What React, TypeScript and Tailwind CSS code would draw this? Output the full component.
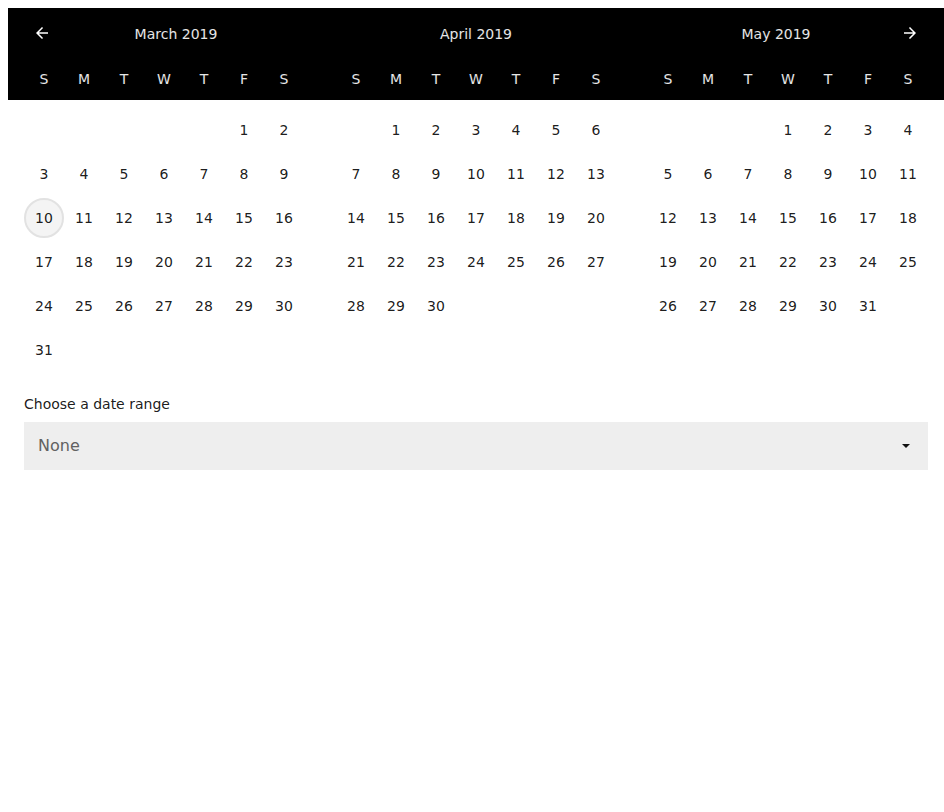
import React from 'react';

type Month = { name: string; start: number; days: number; prev?: boolean; next?: boolean };

const months: Month[] = [
  { name: 'March 2019', start: 5, days: 31, prev: true },
  { name: 'April 2019', start: 1, days: 30 },
  { name: 'May 2019', start: 3, days: 31, next: true },
];

const weekdays = ['S', 'M', 'T', 'W', 'T', 'F', 'S'];

function Arrow({ dir }: { dir: 'left' | 'right' }) {
  return (
    <svg width="12" height="12" viewBox="4 4 16 16" fill="currentColor" className={dir === 'right' ? 'rotate-180' : ''}>
      <path d="M20 11H7.83l5.59-5.59L12 4l-8 8 8 8 1.41-1.41L7.83 13H20v-2z" />
    </svg>
  );
}

function MonthHeader({ m }: { m: Month }) {
  return (
    <div className="w-[312px] px-4">
      <div className="h-[50px] flex items-center">
        {m.prev && (
          <div className="w-6 flex justify-end text-white">
            <Arrow dir="left" />
          </div>
        )}
        <div className="flex-1 text-center text-sm text-white/90 pt-[1px]">{m.name}</div>
        {m.next && (
          <div className="w-6 flex justify-start text-white">
            <Arrow dir="right" />
          </div>
        )}
      </div>
      <div className="h-[42px] grid grid-cols-7 items-center">
        {weekdays.map((d, i) => (
          <div key={i} className="text-center text-sm text-white/90">
            {d}
          </div>
        ))}
      </div>
    </div>
  );
}

function MonthDays({ m }: { m: Month }) {
  const cells: (number | null)[] = [];
  for (let i = 0; i < m.start; i++) cells.push(null);
  for (let d = 1; d <= m.days; d++) cells.push(d);
  return (
    <div className="w-[312px] px-4 pt-2 grid grid-cols-7 content-start">
      {cells.map((d, i) => (
        <div key={i} className="h-[44px] flex items-center justify-center">
          {d !== null && (
            <div
              className={
                'w-10 h-10 rounded-full flex items-center justify-center text-sm text-black/90 ' +
                (m.name === 'March 2019' && d === 10 ? 'bg-[#f4f4f4] border-2 border-[#e2e2e2]' : '')
              }
            >
              {d}
            </div>
          )}
        </div>
      ))}
    </div>
  );
}

export default function App() {
  return (
    <div className="pt-2 pl-2 bg-white min-h-screen" style={{ fontFamily: '"DejaVu Sans", sans-serif' }}>
      <div className="w-[936px]">
        <div className="bg-black flex">
          {months.map((m) => (
            <MonthHeader key={m.name} m={m} />
          ))}
        </div>
        <div className="flex">
          {months.map((m) => (
            <MonthDays key={m.name} m={m} />
          ))}
        </div>
        <div className="px-4 pt-[22px]">
          <label className="block text-sm leading-5 text-black/90">Choose a date range</label>
          <div className="mt-2 h-12 bg-[#eeeeee] flex items-center pl-[14px] pr-[18px]">
            <span className="flex-1 text-base text-[#616161]">None</span>
            <svg width="8" height="4" viewBox="0 0 8 4" fill="#111">
              <path d="M0 0h8L4 4z" />
            </svg>
          </div>
        </div>
      </div>
    </div>
  );
}
